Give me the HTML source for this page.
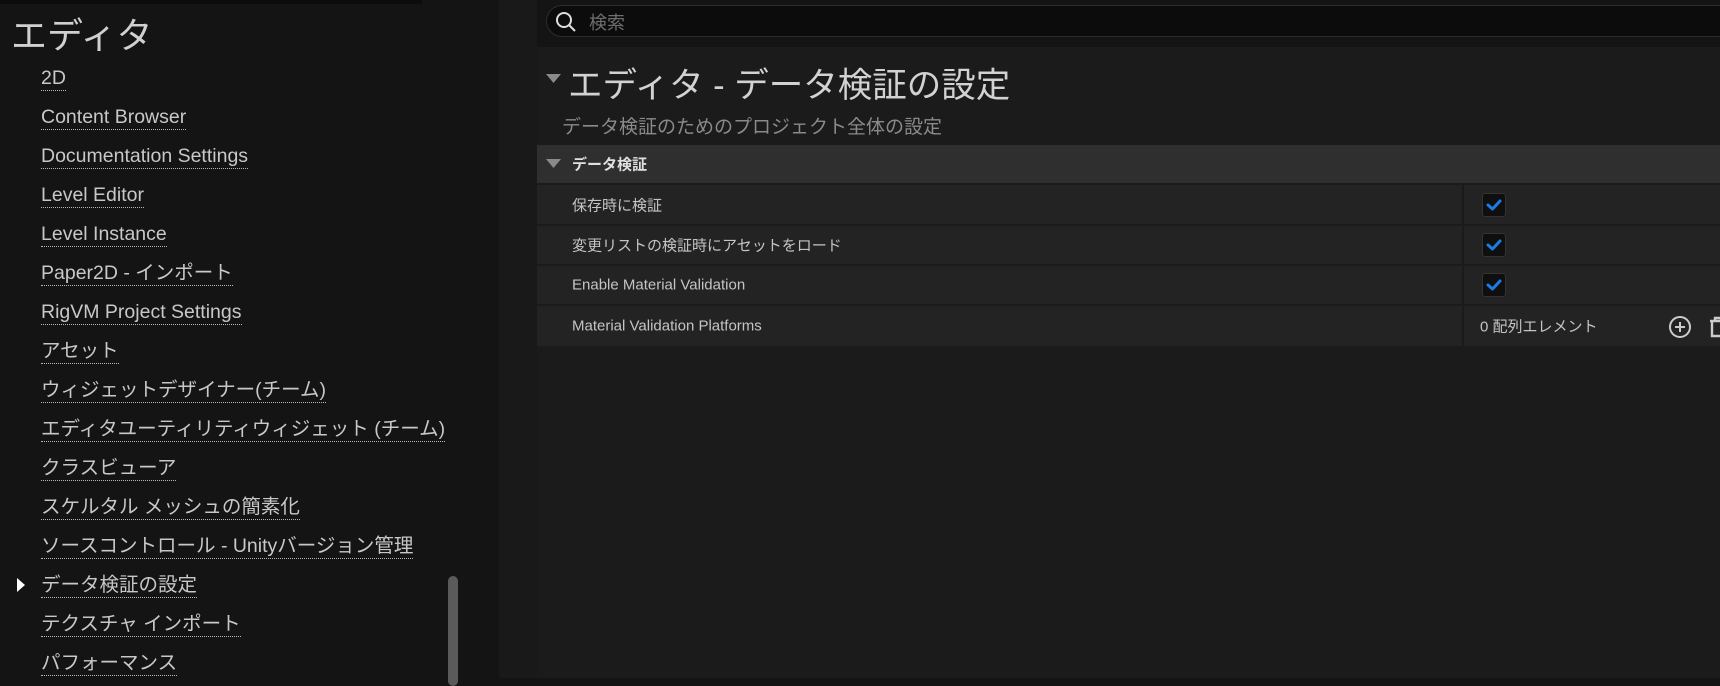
<!DOCTYPE html>
<html><head><meta charset="utf-8"><style>
*{margin:0;padding:0;box-sizing:border-box}
body{width:1720px;height:678px;overflow:hidden;background:#141414;font-family:"Liberation Sans","Noto Sans CJK JP",sans-serif;color:#c8c8c8;position:relative}
.abs{position:absolute;white-space:nowrap}
.topbar{position:absolute;left:0;top:0;width:422px;height:4px;background:#0c0c0c}
.title{left:11px;top:7px;font-size:36px;color:#d0d0d0}
.item{left:41px;font-size:19.5px;color:#c8c8c8;line-height:23px;border-bottom:1px dotted #b8b8b8}
.div{position:absolute;left:499px;top:0;width:38px;height:678px;background:#191919}
.panel{position:absolute;left:537px;top:47px;width:1183px;height:631px;background:#1b1b1b}
.search{position:absolute;left:546px;top:5px;width:1200px;height:32px;border:1px solid #2c2c2c;border-radius:16px;background:#0c0c0c}
.row{position:absolute;left:537px;width:1183px;background:#232323}
.rt{position:absolute;left:35px;font-size:15px;color:#c4c4c4;top:50%;transform:translateY(-50%);white-space:nowrap}
.cb{position:absolute;left:945px;width:24px;height:24px;top:50%;margin-top:-12px;background:#0f0f0f;border:1px solid #333;border-radius:3px}
.vd{position:absolute;left:925px;top:0;bottom:0;width:2px;background:#1a1a1a}
</style></head><body>
<div class="topbar"></div>
<div class="abs title">エディタ</div>
<div class="abs item" style="top:67px">2D</div>
<div class="abs item" style="top:106px">Content Browser</div>
<div class="abs item" style="top:145px">Documentation Settings</div>
<div class="abs item" style="top:184px">Level Editor</div>
<div class="abs item" style="top:223px">Level Instance</div>
<div class="abs item" style="top:262px">Paper2D - インポート</div>
<div class="abs item" style="top:301px">RigVM Project Settings</div>
<div class="abs item" style="top:340px">アセット</div>
<div class="abs item" style="top:379px">ウィジェットデザイナー(チーム)</div>
<div class="abs item" style="top:418px">エディタユーティリティウィジェット (チーム)</div>
<div class="abs item" style="top:457px">クラスビューア</div>
<div class="abs item" style="top:496px">スケルタル メッシュの簡素化</div>
<div class="abs item" style="top:535px">ソースコントロール - Unityバージョン管理</div>
<div class="abs item" style="top:574px">データ検証の設定</div>
<div class="abs item" style="top:613px">テクスチャ インポート</div>
<div class="abs item" style="top:652px">パフォーマンス</div>
<svg class="abs" style="left:16px;top:577px" width="10" height="16"><path d="M1 1 L9 8 L1 15Z" fill="#fff"/></svg>
<div class="abs" style="left:448px;top:576px;width:10px;height:110px;background:#5a5a5a;border-radius:5px"></div>
<div class="div"></div>
<div class="search"></div>
<svg class="abs" style="left:555px;top:11px" width="22" height="22"><circle cx="9" cy="9" r="7" stroke="#ddd" stroke-width="2" fill="none"/><path d="M14 14 L20 20" stroke="#ddd" stroke-width="2"/></svg>
<div class="abs" style="left:589px;top:9px;font-size:18px;color:#6e6e6e">検索</div>
<div class="panel"></div>
<svg class="abs" style="left:546px;top:74px" width="16" height="10"><path d="M0 0 H15 L7.5 9Z" fill="#8a8a8a"/></svg>
<div class="abs" style="left:568px;top:57px;font-size:34.5px;color:#d2d2d2">エディタ - データ検証の設定</div>
<div class="abs" style="left:562px;top:112px;font-size:19px;color:#8a8a8a">データ検証のためのプロジェクト全体の設定</div>
<div class="row" style="top:145px;height:38px;background:#2f2f2f"><svg class="abs" style="left:9px;top:14px" width="16" height="10"><path d="M0 0 H15 L7.5 9Z" fill="#8a8a8a"/></svg><div class="rt" style="font-weight:bold;color:#e0e0e0;font-size:15px">データ検証</div></div>
<div class="row" style="top:185px;height:39px"><div class="rt">保存時に検証</div><div class="vd"></div><div class="cb"><svg width="22" height="22"><path d="M5 11 L9.5 15 L17 7" stroke="#1a7de6" stroke-width="3" fill="none" stroke-linecap="round" stroke-linejoin="round"/></svg></div></div>
<div class="row" style="top:226px;height:38px"><div class="rt">変更リストの検証時にアセットをロード</div><div class="vd"></div><div class="cb"><svg width="22" height="22"><path d="M5 11 L9.5 15 L17 7" stroke="#1a7de6" stroke-width="3" fill="none" stroke-linecap="round" stroke-linejoin="round"/></svg></div></div>
<div class="row" style="top:266px;height:38px"><div class="rt">Enable Material Validation</div><div class="vd"></div><div class="cb"><svg width="22" height="22"><path d="M5 11 L9.5 15 L17 7" stroke="#1a7de6" stroke-width="3" fill="none" stroke-linecap="round" stroke-linejoin="round"/></svg></div></div>
<div class="row" style="top:306px;height:40px"><div class="rt">Material Validation Platforms</div><div class="vd"></div><div class="rt" style="left:943px">0 配列エレメント</div>
<svg class="abs" style="left:1131px;top:9px" width="24" height="24"><circle cx="12" cy="12" r="10" stroke="#ccc" stroke-width="2" fill="none"/><path d="M12 7V17M7 12H17" stroke="#ccc" stroke-width="2"/></svg>
<svg class="abs" style="left:1170px;top:9px" width="20" height="24"><path d="M3 6H20M8 6V3H14V6M5 6V21H18" stroke="#ccc" stroke-width="2.4" fill="none"/></svg></div>
</body></html>
